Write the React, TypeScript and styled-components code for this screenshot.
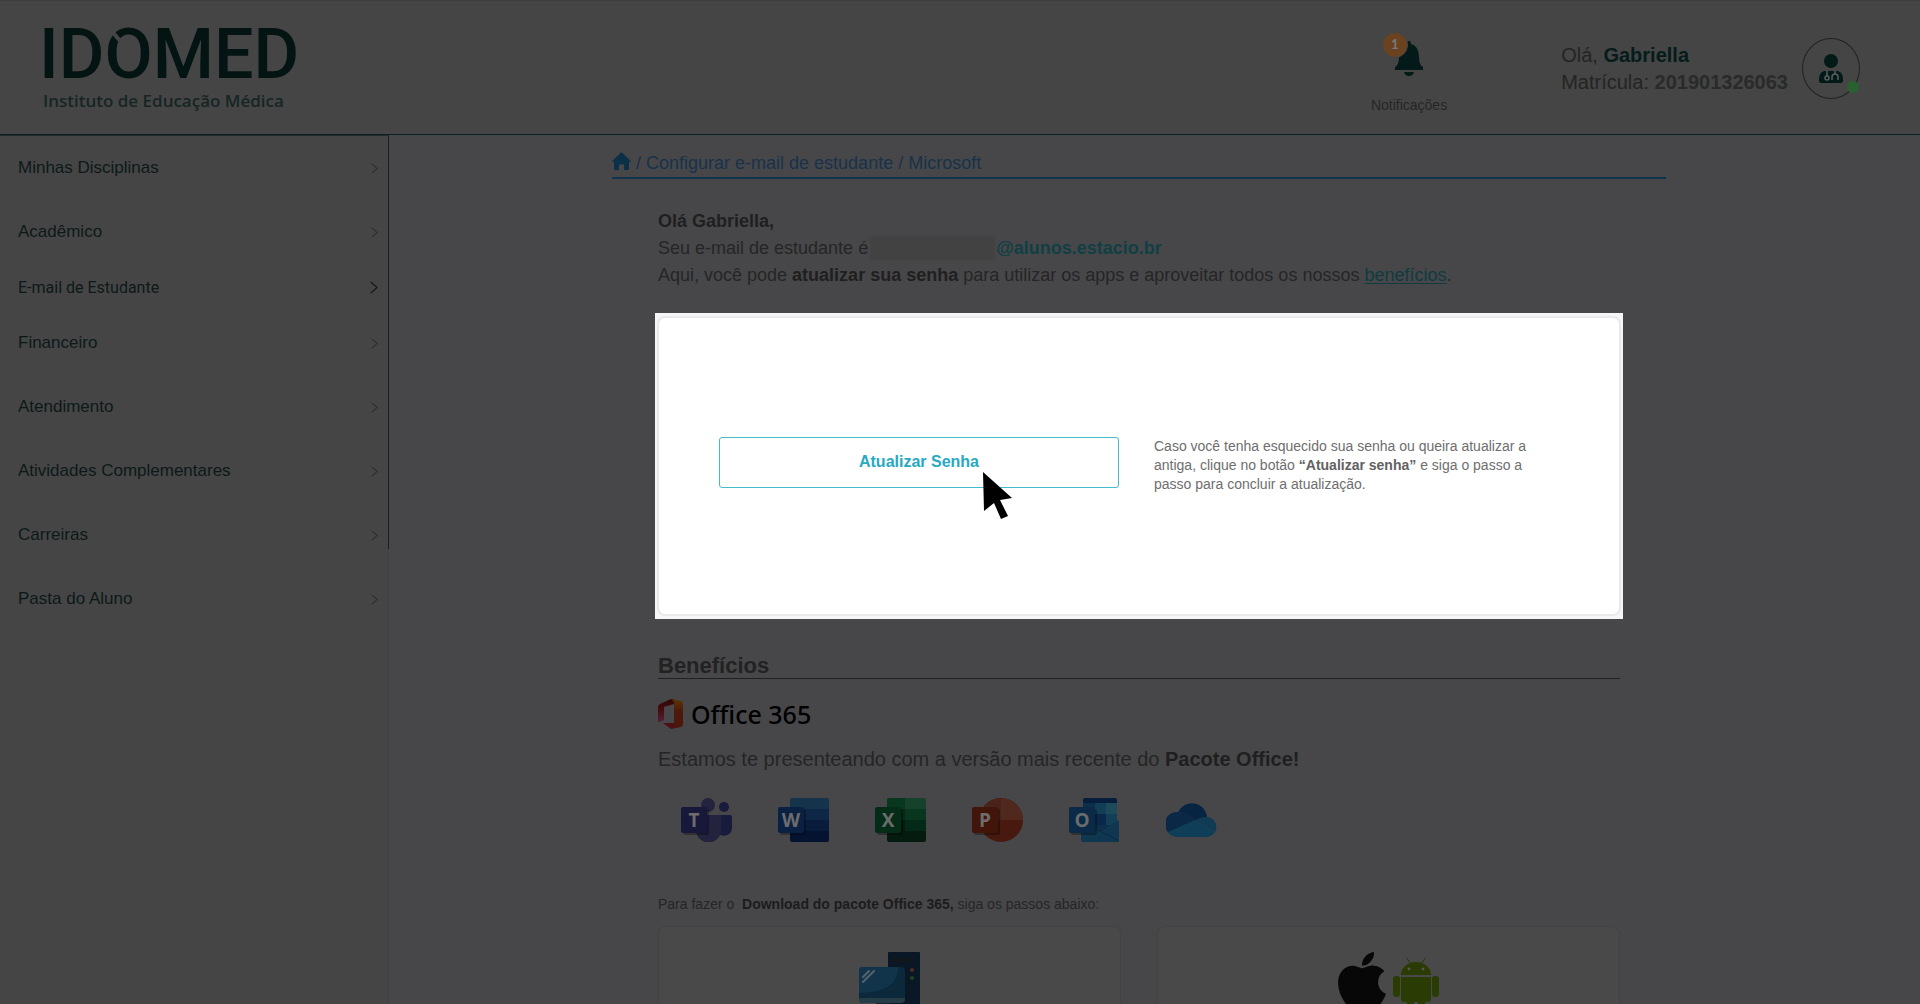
import React from "react";
import styled, { createGlobalStyle, css } from "styled-components";
import { FaApple } from "react-icons/fa";

const GlobalStyle = createGlobalStyle`
  *, *::before, *::after { box-sizing: border-box; }
  body {
    margin: 0;
    background: #474749;
    color: #252525;
    font-family: "Liberation Sans", Arial, sans-serif;
  }
  h1, h2, p, ul { margin: 0; padding: 0; }
  ul { list-style: none; }
  svg { display: block; }
`;

const Page = styled.div`
  display: flex;
  flex-direction: column;
  height: 100vh;
  overflow: hidden;
  border-top: 1px solid #3d3d3d;
`;

const Header = styled.header`
  display: flex;
  align-items: flex-start;
  flex: none;
  height: 134px;
  padding: 25px 60px 0 39px;
  background: #454545;
  border-bottom: 1px solid #0a2322;
`;

const Brand = styled.a`
  position: relative;
  color: #031413;
  text-decoration: none;
`;

const BrandName = styled.span`
  display: block;
  font: 500 70px/56px Roboto, sans-serif;
`;

const BrandCut = styled.svg`
  position: absolute;
  left: 70px;
  top: 0;
`;

const Tagline = styled.span`
  display: block;
  margin-top: 7px;
  padding-left: 4px;
  color: #162524;
  font: 600 17px/24px "Open Sans", sans-serif;
`;

const Notifications = styled.button`
  position: relative;
  display: flex;
  flex-direction: column;
  align-items: center;
  gap: 18px;
  margin: 15px 0 0 auto;
  padding: 0;
  border: 0;
  background: none;
  color: #252525;
  font: 14px/20px "Liberation Sans", Arial, sans-serif;
  cursor: pointer;
`;

const Badge = styled.span`
  position: absolute;
  left: 11px;
  top: -9px;
  width: 26px;
  height: 26px;
  border: 1px solid #454545;
  border-radius: 50%;
  background: #6a4220;
  color: #777;
  font: 700 14px/22px Lato, sans-serif;
  text-align: center;
`;

const Profile = styled.div`
  display: flex;
  align-items: center;
  gap: 14px;
  margin: 12px 0 0 114px;
`;

const ProfileText = styled.div`
  font-size: 20px;
  line-height: 27px;
  color: #242424;
  b { color: #292a2a; }
  p:first-child b { color: #061c1b; }
`;

const Avatar = styled.button`
  position: relative;
  display: grid;
  place-items: center;
  width: 58px;
  height: 61px;
  padding: 0;
  border: 1px solid #222;
  border-radius: 50%;
  background: none;
`;

const Online = styled.span`
  position: absolute;
  right: 0;
  bottom: 5px;
  width: 12px;
  height: 12px;
  border-radius: 50%;
  background: #28602f;
`;

const Columns = styled.div`
  display: flex;
  flex: 1;
  min-height: 0;
`;

const Sidebar = styled.nav`
  flex: none;
  width: 389px;
  background: #454545;
  border-right: 1px solid #424140;
`;

const Menu = styled.ul`
  height: 414px;
  margin-right: -1px;
  border-top: 1px solid #252b2b;
  border-right: 1px solid #1c1c22;
`;

const MenuLink = styled.a<{ $compact?: boolean }>`
  display: flex;
  align-items: center;
  justify-content: space-between;
  height: 64px;
  padding: 0 10px 0 18px;
  color: #0d1919;
  font: 17px/24px "Liberation Sans", Arial, sans-serif;
  text-decoration: none;
  ${(p) => p.$compact && css`
    height: 47px;
    font: 16px/24px Roboto, sans-serif;
  `}
`;

const Main = styled.main`
  flex: 1;
  min-width: 0;
  padding: 0 254px 0 223px;
`;

const Breadcrumb = styled.nav`
  display: flex;
  align-items: flex-end;
  gap: 5px;
  height: 44px;
  padding-bottom: 2px;
  border-bottom: 2px solid #10344c;
  color: #17324a;
  font-size: 18px;
  line-height: 24px;
  a { color: inherit; text-decoration: none; }
  svg { margin-bottom: 5px; }
`;

const Body = styled.div`
  padding: 29px 46px 0;
`;

const Intro = styled.div`
  font-size: 18px;
  line-height: 27px;
  b { color: #1f1f1f; }
`;

const MailLine = styled.p`
  display: flex;
  align-items: center;
  b { color: #103f44; }
`;

const Redacted = styled.span`
  width: 123px;
  height: 23px;
  margin: 0 2px 0 3px;
  background: #424242;
  box-shadow: 0 0 3px #424242;
`;

const TextLink = styled.a`
  color: #103c40;
  text-underline-offset: 2px;
`;

const Spotlight = styled.section`
  margin: 24px -3px 0;
  padding: 3px 2px;
  background: #f6f6f8;
`;

const Panel = styled.div`
  position: relative;
  display: flex;
  align-items: center;
  gap: 35px;
  min-height: 300px;
  padding: 0 81px 8px 60px;
  border: 2px solid #e8e9ea;
  border-radius: 8px;
  background: #fff;
`;

const UpdateButton = styled.button`
  flex: none;
  width: 400px;
  height: 51px;
  border: 1px solid #45bccc;
  border-radius: 3px;
  background: #fff;
  color: #27a9c1;
  font: 700 16px/24px "Liberation Sans", Arial, sans-serif;
  cursor: pointer;
`;

const Pointer = styled.svg`
  position: absolute;
  left: 324px;
  top: 154px;
`;

const Hint = styled.p`
  flex: 1;
  max-width: 384px;
  margin-top: 6px;
  color: #6e6e6e;
  font-size: 14px;
  line-height: 19px;
  b { color: #626262; }
`;

const SectionTitle = styled.h2`
  margin-top: 35px;
  border-bottom: 1px solid #202020;
  color: #222;
  font-size: 22px;
  line-height: 24px;
`;

const OfficeBrand = styled.div`
  display: flex;
  align-items: center;
  gap: 8px;
  height: 30px;
  margin-top: 20px;
  color: #000;
  font: 500 25px/30px "Noto Sans", sans-serif;
`;

const Lead = styled.p`
  margin-top: 18px;
  font-size: 20px;
  line-height: 24px;
  b { color: #1f1f1f; }
`;

const Apps = styled.ul`
  display: flex;
  gap: 46px;
  margin: 27px 0 0 23px;
`;

const Download = styled.p`
  margin-top: 52px;
  font-size: 14px;
  line-height: 20px;
  white-space: pre-wrap;
  b { color: #1c1c1c; }
`;

const Cards = styled.div`
  display: flex;
  gap: 36px;
  margin-top: 12px;
`;

const Card = styled.article`
  display: flex;
  flex: 1;
  align-items: flex-start;
  justify-content: center;
  gap: 7px;
  height: 240px;
  padding-top: 25px;
  border: 1px solid #424243;
  border-radius: 8px;
  background: #494949;
`;

const AppleMark = styled(FaApple)`
  width: 48px;
  height: 57px;
  color: #070707;
`;

const Chevron = ({ large }: { large?: boolean }) => (
  <svg width={large ? 8 : 7} height={large ? 13 : 11} viewBox="0 0 7 11" fill="none" stroke={large ? "#161616" : "#242424"} aria-hidden="true">
    <path d="M.7.7 6.2 5.5.7 10.3" />
  </svg>
);

const tile = (color: string, letter: string) => (
  <>
    <rect x="2" y="11" width="26" height="26" rx="2" fill="#000" opacity=".3" />
    <rect y="9" width="26" height="26" rx="2" fill={color} />
    <text x="13" y="29" textAnchor="middle" fill="#6c6c6c" fontFamily="Open Sans, sans-serif" fontWeight="700" fontSize="19">{letter}</text>
  </>
);

const apps: { name: string; art: React.ReactNode }[] = [
  {
    name: "Teams",
    art: (
      <>
        <circle cx="27" cy="7" r="7" fill="#23233f" />
        <circle cx="43" cy="9" r="5" fill="#191b3c" />
        <path d="M36 17h13q2 0 2 2v11a8 8 0 0 1-13 6z" fill="#191b3c" />
        <path d="M15 17h25v15a12 12 0 0 1-25 0z" fill="#23233f" />
        {tile("#18193a", "T")}
      </>
    ),
  },
  {
    name: "Word",
    art: (
      <>
        <path d="M12 11V2q0-2 2-2h35q2 0 2 2v9z" fill="#15334a" />
        <path d="M12 11h39v11H12z" fill="#0e2747" />
        <path d="M12 22h39v11H12z" fill="#0a1c3c" />
        <path d="M12 33h39v9q0 2-2 2H14q-2 0-2-2z" fill="#061330" />
        {tile("#0b2143", "W")}
      </>
    ),
  },
  {
    name: "Excel",
    art: (
      <>
        <path d="M12 11V2q0-2 2-2h16v11z" fill="#08361e" />
        <path d="M30 0h19q2 0 2 2v9H30z" fill="#16412c" />
        <path d="M12 11h18v11H12z" fill="#052918" />
        <path d="M30 11h21v11H30z" fill="#08361e" />
        <path d="M12 22h18v11H12z" fill="#061b10" />
        <path d="M30 22h21v11H30z" fill="#052918" />
        <path d="M12 33h39v9q0 2-2 2H14q-2 0-2-2z" fill="#061b10" />
        {tile("#042c17", "X")}
      </>
    ),
  },
  {
    name: "PowerPoint",
    art: (
      <>
        <circle cx="29" cy="22" r="22" fill="#47190f" />
        <path d="M29 0a22 22 0 0 1 22 22H29z" fill="#50281e" />
        <path d="M29 0v22H7A22 22 0 0 1 29 0z" fill="#49221a" />
        {tile("#42150a", "P")}
      </>
    ),
  },
  {
    name: "Outlook",
    art: (
      <>
        <path d="M14 7V2q0-2 2-2h30q2 0 2 2v5z" fill="#061d3c" />
        <path d="M14 5h34v21L31 35 14 26z" fill="#0d2e4c" />
        <path d="M26 5h11v11H26z" fill="#123f55" />
        <path d="M37 5h11v11H37z" fill="#1d4b59" />
        <path d="M26 16h11v11H26z" fill="#0b284a" />
        <path d="M37 16h11v11H37z" fill="#123f55" />
        <path d="M50 22v20q0 2-2 2H14q-2 0-2-2V26l19 8z" fill="#0f3850" />
        <path d="m31 33 19 10" stroke="#0a2a42" />
        {tile("#0b2a48", "O")}
      </>
    ),
  },
  {
    name: "OneDrive",
    art: (
      <>
        <path d="M12 15a15 15 0 0 1 29 4L30 24z" fill="#082443" />
        <path d="M2 34A12 12 0 0 1 12 14q6-1 12 3l7 5L5 37z" fill="#0b2847" />
        <path d="M29 22q6-3 11-3a10 10 0 0 1 9 15z" fill="#113a54" />
        <path d="m2 34 27-12 20 12q-3 5-9 5H12q-7 0-10-5z" fill="#0f3f58" />
      </>
    ),
  },
];

const menu = [
  "Minhas Disciplinas",
  "Acadêmico",
  "E-mail de Estudante",
  "Financeiro",
  "Atendimento",
  "Atividades Complementares",
  "Carreiras",
  "Pasta do Aluno",
];

const Bell = () => (
  <svg width="28" height="36" viewBox="0 0 28 36" fill="#031a18" aria-hidden="true">
    <path d="M14 0q2 0 2 3 8 2 8 13 0 8 4 10v3H0v-3q4-2 4-10Q4 5 12 3q0-3 2-3z" />
    <path d="M9 31h10q-1 4-5 4t-5-4z" />
  </svg>
);

const Doctor = () => (
  <svg width="24" height="29" viewBox="0 0 24 29" fill="#031a18" aria-hidden="true">
    <ellipse cx="12" cy="7" rx="7" ry="7" />
    <path d="M5 17h14q5 2 5 8v2q0 2-2 2H2q-2 0-2-2v-2q0-6 5-8z" />
    <path d="M8 17v5M16 17v3m-3 6v-3q0-3 3-3t3 3v3" fill="none" stroke="#5a5f5f" strokeWidth="1.500" />
    <circle cx="8" cy="24" r="2" fill="none" stroke="#5a5f5f" strokeWidth="1.500" />
  </svg>
);

const Home = () => (
  <svg width="19" height="18" viewBox="0 0 19 18" fill="#0c3048" aria-hidden="true">
    <path d="M9 .4q.5-.5 1 0L18.700 9q.6 1-.5 1H17v7q0 1-1 1h-4v-5.500H7V18H3q-1 0-1-1v-7H.8Q-.3 10 .3 9z" />
  </svg>
);

const OfficeMark = () => (
  <svg width="25" height="30" viewBox="0 0 25 30" aria-hidden="true">
    <defs>
      <linearGradient id="officeRight" x1="0" y1="0" x2="0" y2="1">
        <stop offset="0" stopColor="#5c3503" />
        <stop offset=".4" stopColor="#4c1a0b" />
        <stop offset="1" stopColor="#4c150b" />
      </linearGradient>
      <linearGradient id="officeLeft" x1="0" y1="0" x2="0" y2="1">
        <stop offset="0" stopColor="#300605" />
        <stop offset=".5" stopColor="#470d12" />
        <stop offset="1" stopColor="#552039" />
      </linearGradient>
    </defs>
    <path d="M13 0 2 5Q0 6 0 8v14q0 2 2 1l4-2V8l10-3V0z" fill="url(#officeLeft)" />
    <path d="m13 0 10 2q2 1 2 3v20q0 2-2 3l-10 2 3-6V3z" fill="url(#officeRight)" />
    <path d="M5 24h11v4l-3 2z" fill="#4e0f17" />
  </svg>
);

const Computer = () => (
  <svg width="61" height="70" viewBox="0 0 61 70" aria-hidden="true">
    <rect x="29" width="32" height="70" rx="1" fill="#0a1826" />
    <rect x="33" y="6" width="23" height="4" rx="1" fill="#11161b" />
    <circle cx="53" cy="18" r="2" fill="#542a2a" />
    <circle cx="53" cy="26" r="2" fill="#1c4425" />
    <rect x="17" y="50" width="14" height="20" fill="#1a262b" />
    <rect y="15" width="46" height="36" rx="4" fill="#0c283b" />
    <path d="M4 15h35q0 26-39 26V19q0-4 4-4z" fill="#12344a" />
    <path d="M0 46h46v1q0 4-4 4H4q-4 0-4-4z" fill="#263c47" />
    <path d="m4 25 6-6M4 30l11-11" stroke="#55636b" strokeWidth="2" strokeLinecap="round" />
  </svg>
);

const Android = () => (
  <svg width="46" height="64" viewBox="0 -6 46 64" fill="#2a3b04" aria-hidden="true">
    <path d="M8 17a15 13 0 0 1 30 0z" />
    <path d="m14 0 3 5M32 0l-3 5" stroke="#2a3b04" />
    <circle cx="16" cy="11" r="1.500" fill="#555" />
    <circle cx="30" cy="11" r="1.500" fill="#555" />
    <path d="M8 19h30v22q0 3-3 3H11q-3 0-3-3z" />
    <rect y="18" width="7" height="21" rx="3" />
    <rect x="39" y="18" width="7" height="21" rx="3" />
    <rect x="14" y="40" width="7" height="16" rx="3" />
    <rect x="25" y="40" width="7" height="16" rx="3" />
  </svg>
);

export default function App() {
  return (
    <Page>
      <GlobalStyle />
      <Header>
        <Brand href="#">
          <BrandName>IDOMED</BrandName>
          <BrandCut width="16" height="24" viewBox="0 0 16 24" aria-hidden="true">
            <path d="M1 3 12 16" stroke="#454545" strokeWidth="4" />
          </BrandCut>
          <Tagline>Instituto de Educação Médica</Tagline>
        </Brand>
        <Notifications>
          <Bell />
          <Badge>1</Badge>
          Notificações
        </Notifications>
        <Profile>
          <ProfileText>
            <p>Olá, <b>Gabriella</b></p>
            <p>Matrícula: <b>201901326063</b></p>
          </ProfileText>
          <Avatar aria-label="Perfil">
            <Doctor />
            <Online />
          </Avatar>
        </Profile>
      </Header>
      <Columns>
        <Sidebar>
          <Menu>
            {menu.map((label, i) => (
              <li key={label}>
                <MenuLink href="#" $compact={i === 2}>
                  {label}
                  <Chevron large={i === 2} />
                </MenuLink>
              </li>
            ))}
          </Menu>
        </Sidebar>
        <Main>
          <Breadcrumb>
            <a href="#" aria-label="Início"><Home /></a>
            <span>/ <a href="#">Configurar e-mail de estudante</a> / <a href="#">Microsoft</a></span>
          </Breadcrumb>
          <Body>
            <Intro>
              <p><b>Olá Gabriella,</b></p>
              <MailLine>
                Seu e-mail de estudante é <Redacted /><b>@alunos.estacio.br</b>
              </MailLine>
              <p>
                Aqui, você pode <b>atualizar sua senha</b> para utilizar os apps e aproveitar todos os nossos{" "}
                <TextLink href="#beneficios">benefícios</TextLink>.
              </p>
            </Intro>
            <Spotlight>
              <Panel>
                <UpdateButton>Atualizar Senha</UpdateButton>
                <Hint>
                  Caso você tenha esquecido sua senha ou queira atualizar a antiga, clique no botão{" "}
                  <b>“Atualizar senha”</b> e siga o passo a passo para concluir a atualização.
                </Hint>
                <Pointer width="30" height="47" viewBox="0 0 30 47" aria-hidden="true">
                  <path d="M0 0 29 26 17 28l8 16-7 3-7-16-10 8z" />
                </Pointer>
              </Panel>
            </Spotlight>
            <SectionTitle id="beneficios">Benefícios</SectionTitle>
            <OfficeBrand><OfficeMark />Office 365</OfficeBrand>
            <Lead>
              Estamos te presenteando com a versão mais recente do <b>Pacote Office!</b>
            </Lead>
            <Apps>
              {apps.map((app) => (
                <li key={app.name}>
                  <svg width="51" height="44" viewBox="0 0 51 44" role="img" aria-label={app.name}>{app.art}</svg>
                </li>
              ))}
            </Apps>
            <Download>
              Para fazer o  <b>Download do pacote Office 365,</b> siga os passos abaixo:
            </Download>
            <Cards>
              <Card><Computer /></Card>
              <Card>
                <AppleMark viewBox="4 32 376 448" />
                <Android />
              </Card>
            </Cards>
          </Body>
        </Main>
      </Columns>
    </Page>
  );
}
